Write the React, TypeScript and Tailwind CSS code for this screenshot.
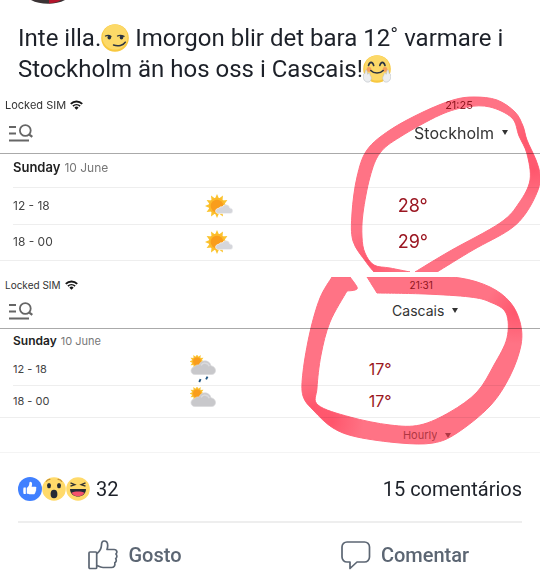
import type { ReactNode } from "react";
import clsx from "clsx";

type Point = [number, number];
type Weather = "sunny" | "showers" | "cloudy";

interface Forecast {
  hours: string;
  weather: Weather;
  temperature: string;
}

// Smooth closed outline through all points; a repeated point makes a corner
function smoothPath(points: Point[]) {
  const n = points.length;
  let d = `M${points[0][0]} ${points[0][1]}`;

  for (let i = 0; i < n; i++) {
    const p0 = points[(i - 1 + n) % n];
    const p1 = points[i];
    const p2 = points[(i + 1) % n];
    const p3 = points[(i + 2) % n];
    if (p1[0] === p2[0] && p1[1] === p2[1]) continue;

    d += `C${p1[0] + (p2[0] - p0[0]) / 6} ${p1[1] + (p2[1] - p0[1]) / 6} ${
      p2[0] - (p3[0] - p1[0]) / 6
    } ${p2[1] - (p3[1] - p1[1]) / 6} ${p2[0]} ${p2[1]}`;
  }

  return d + "Z";
}

const stockholmMarker: Point[] = [
  [374, 272], [374, 272], [366, 262], [353, 241], [352, 213], [357, 177],
  [367, 150], [390, 130], [423, 112], [453, 100], [474, 97], [497, 100],
  [515, 112], [523, 126], [527, 140], [536, 160], [540, 175], [538, 190],
  [526, 213], [509, 230], [473, 250], [437, 272], [437, 272], [415, 272],
  [415, 272], [450, 251], [500, 223], [519, 203], [530, 180], [527, 154],
  [519, 136], [512, 118], [490, 107], [467, 107], [440, 115], [400, 137],
  [380, 153], [370, 177], [363, 213], [362, 237], [365, 253], [374, 265],
  [390, 268], [410, 272], [410, 272],
];

const cascaisMarker: Point[] = [
  [332, 277], [332, 277], [320, 298], [310, 332], [303, 372], [303, 396],
  [314, 411], [333, 428], [357, 437], [400, 443], [433, 443], [457, 433],
  [490, 406], [510, 376], [521, 345], [520, 322], [510, 302], [490, 287],
  [460, 278], [423, 277], [367, 277], [367, 277], [377, 293], [377, 293],
  [425, 294], [470, 297], [490, 302], [506, 313], [507, 338], [494, 365],
  [477, 392], [450, 412], [420, 425], [390, 425], [350, 417], [318, 405],
  [317, 388], [321, 355], [330, 322], [347, 291], [347, 291], [355, 290],
  [357, 287], [350, 277], [350, 277],
];

function Marker({
  id,
  points,
  overlaps,
  viewBox,
}: {
  id: string;
  points: Point[];
  overlaps: Point[];
  viewBox: string;
}) {
  const outline = smoothPath(points);

  return (
    <svg
      viewBox={viewBox}
      preserveAspectRatio="none"
      className="pointer-events-none absolute inset-0 h-full w-full mix-blend-multiply"
      aria-hidden="true"
    >
      <defs>
        <clipPath id={`${id}-clip`}>
          <path d={outline} />
        </clipPath>
        <radialGradient id={`${id}-ink`}>
          <stop offset="0" stopColor="#ff4a62" stopOpacity=".7" />
          <stop offset="1" stopColor="#ff4a62" stopOpacity="0" />
        </radialGradient>
      </defs>
      <path d={outline} fill="#ff7385" stroke="#ff6d80" strokeWidth="1" />
      {/* darker ink where the pen slowed down */}
      <g clipPath={`url(#${id}-clip)`}>
        {overlaps.map(([x, y]) => (
          <circle key={`${x}-${y}`} cx={x} cy={y} r="32" fill={`url(#${id}-ink)`} />
        ))}
      </g>
    </svg>
  );
}

function Wifi() {
  return (
    <svg viewBox="0 0 13 10" className="h-2.5 w-[13px]" fill="none" stroke="#151515" aria-hidden="true">
      <path d="M.8 3.9a8.2 8.2 0 0 1 11.4 0" strokeWidth="2" />
      <path d="M2.9 6.2a5.2 5.2 0 0 1 7.2 0" strokeWidth="1.6" />
      <path d="M6.5 9.8 4.4 7.7a2.9 2.9 0 0 1 4.2 0Z" fill="#151515" stroke="none" />
    </svg>
  );
}

function SearchList() {
  return (
    <svg viewBox="0 0 25 18" className="h-[18px] w-[25px]" fill="none" stroke="#666" strokeWidth="1.8" aria-hidden="true">
      <path d="M1 3h7M1 9.5h7M1 16.5h20" />
      <circle cx="17.3" cy="6.5" r="5.4" />
      <path d="m21 10.3 3.3 2.6" strokeWidth="2.2" />
    </svg>
  );
}

function Sun({ x, y, r }: { x: number; y: number; r: number }) {
  return (
    <g transform={`translate(${x} ${y}) scale(${r})`}>
      {[0, 30, 60, 90, 120, 150, 180, 210, 240, 270, 300, 330].map((angle) => (
        <path key={angle} d="M-.3-.95 0-1.62.3-.95Z" fill="#fbc42f" transform={`rotate(${angle})`} />
      ))}
      <circle r="1.1" fill="#fcb92b" />
      <circle r=".85" fill="#f99d1c" />
    </g>
  );
}

function WeatherIcon({ weather }: { weather: Weather }) {
  if (weather === "sunny") {
    return (
      <svg viewBox="0 0 28 24" className="h-6 w-7" role="img" aria-label="Sunny intervals">
        <Sun x={12} y={12} r={7.4} />
        <path
          d="M13.8 19.6C9.5 19.6 9.6 14.3 14 14.2 14.8 12.8 16.2 12.6 17.3 13 19 9.3 24.3 10.3 24.9 14 29 14.3 28.6 19.6 25 19.6Z"
          fill="#d5d6db"
          stroke="#f3f3f5"
          strokeWidth=".8"
        />
      </svg>
    );
  }

  return (
    <svg viewBox="0 0 27 28" className="h-7 w-[27px]" role="img" aria-label={weather === "showers" ? "Showers" : "Cloudy"}>
      <Sun x={7} y={6.5} r={4.6} />
      <path
        d="M5 19.5C-.2 19.5-.2 12.6 4.5 11.8 5.5 10.1 7.5 9.7 9 10 11.2 4.3 19.5 4.3 21 10.8 27.2 11.8 26.700 19.5 21.500 19.5Z"
        fill="#c8c8cb"
        stroke="#d8d8db"
        strokeWidth=".7"
      />
      <path d="M11 10.300c2-3.300 7-2.800 8.300 1" fill="none" stroke="#dadadd" strokeWidth="1.5" />
      {weather === "showers" && (
        <path d="m10.600 24.200-1.400 2.800M17.500 21.600l-1.400 2.800" stroke="#205582" strokeWidth="1.9" />
      )}
    </svg>
  );
}

function Caret() {
  return (
    <svg viewBox="0 0 6 5" className="h-[5px] w-1.5" fill="currentColor" aria-hidden="true">
      <path d="M0 0h6L3 5Z" />
    </svg>
  );
}

function Picker({ label, value, className }: { label: string; value: string; className: string }) {
  return (
    <div className={clsx("flex items-center justify-center", className)}>
      <select
        aria-label={label}
        className="field-sizing-content appearance-none bg-transparent"
        defaultValue={value}
      >
        <option>{value}</option>
      </select>
      <Caret />
    </div>
  );
}

function ForecastTable({
  rows,
  rowClass,
  iconClass,
  tempClass,
}: {
  rows: Forecast[];
  rowClass: string;
  iconClass: string;
  tempClass: string;
}) {
  return (
    <div className="border-b border-[#eee] pl-[13px]">
      <table className="w-full table-fixed border-collapse">
        <tbody>
          {rows.map((row) => (
            <tr key={row.hours} className={clsx("border-b border-[#eee] last:border-0", rowClass)}>
              <th scope="row" className="p-0 text-left font-normal text-[#444]">
                {row.hours}
              </th>
              <td className={clsx("p-0", iconClass)}>
                <div className="flex">
                  <WeatherIcon weather={row.weather} />
                </div>
              </td>
              <td className={clsx("p-0 text-[#9b1722]", tempClass)}>{row.temperature}</td>
            </tr>
          ))}
        </tbody>
      </table>
    </div>
  );
}

function StockholmPanel() {
  return (
    <section className="relative overflow-hidden bg-white pb-[11px] font-['Inter',sans-serif]">
      <div className="grid h-[22px] grid-cols-[7fr_3fr] items-center text-[11px] text-[#333]">
        <span className="flex items-center gap-1 pl-[5px]">
          Locked SIM <Wifi />
        </span>
        <time className="text-center text-[#8f2f38]">21:25</time>
      </div>
      <div className="grid h-[38px] grid-cols-[7fr_3fr] items-center border-b border-[#aaa] pb-1">
        <button type="button" aria-label="Search places" className="w-fit pl-2">
          <SearchList />
        </button>
        <Picker label="Place" value="Stockholm" className="gap-2 pl-1 text-base text-[#333]" />
      </div>
      <div className="pl-[13px]">
        <h2 className="flex h-[34px] items-center gap-1 border-b border-[#eee] pb-1.5 text-[13px] font-semibold text-[#222]">
          Sunday <span className="text-xs font-normal text-[#777]">10 June</span>
        </h2>
      </div>
      <ForecastTable
        rows={[
          { hours: "12 - 18", weather: "sunny", temperature: "28°" },
          { hours: "18 - 00", weather: "sunny", temperature: "29°" },
        ]}
        rowClass="h-9 text-xs"
        iconClass="w-[36.5%]"
        tempClass="w-[27%] text-lg"
      />
      <Marker
        id="stockholm"
        points={stockholmMarker}
        overlaps={[[370, 262], [528, 140], [534, 170]]}
        viewBox="0 94 540 178"
      />
    </section>
  );
}

function CascaisPanel() {
  return (
    <section className="relative bg-white font-['Inter',sans-serif]">
      <div className="grid h-4 grid-cols-[56fr_44fr] items-center text-[10px] text-[#333]">
        <span className="flex items-center gap-1 pl-[5px]">
          Locked SIM <Wifi />
        </span>
        <time className="text-center text-[#8f2f38]">21:31</time>
      </div>
      <div className="grid h-9 grid-cols-[56fr_44fr] items-center border-b border-[#aaa]">
        <button type="button" aria-label="Search places" className="w-fit pl-2">
          <SearchList />
        </button>
        <Picker label="Place" value="Cascais" className="gap-2 pl-2 text-[14px] text-[#333]" />
      </div>
      <h2 className="flex h-6 items-center gap-1 pl-[13px] text-xs font-semibold text-[#222]">
        Sunday <span className="text-[11px] font-normal text-[#777]">10 June</span>
      </h2>
      <ForecastTable
        rows={[
          { hours: "12 - 18", weather: "showers", temperature: "17°" },
          { hours: "18 - 00", weather: "cloudy", temperature: "17°" },
        ]}
        rowClass="h-8 text-[11px]"
        iconClass="w-[34%]"
        tempClass="w-[32.5%] text-base"
      />
      <div className="grid h-[35px] grid-cols-[56fr_44fr] items-center border-b border-[#f4f4f4]">
        <Picker label="Interval" value="Hourly" className="col-start-2 gap-2 pl-3 text-[11px] text-[#b07a80]" />
      </div>
      <Marker
        id="cascais"
        points={cascaisMarker}
        overlaps={[[312, 408], [516, 312], [332, 422]]}
        viewBox="0 277 540 176"
      />
    </section>
  );
}

function Smirk() {
  return (
    <svg viewBox="0 0 28 28" className="inline-block size-7 align-[-6px]" role="img" aria-label="smirking face">
      <circle cx="14" cy="14" r="13.8" fill="#f8c83f" />
      <circle cx="14" cy="13" r="12.6" fill="#fcd968" />
      <g fill="none" stroke="#2b3442" strokeWidth="1.3" strokeLinecap="round">
        <path d="M4.500 12c2-1 4-.8 5.500.4M16.500 12c2-1 4.500-.8 6.500.4" />
        <path d="M12.500 21c4.500 1.500 10 .5 11.800-2.800" strokeWidth="1.5" />
      </g>
      <ellipse cx="8.3" cy="13.4" rx="1.8" ry="2" fill="#2b3442" />
      <ellipse cx="20.5" cy="13.4" rx="1.8" ry="2" fill="#2b3442" />
    </svg>
  );
}

function Hug() {
  const hand =
    "M2.500 15.200c1-.7 1.600.2 1.600 1.700l.7 2.400c.7-1.800 2.300-1.600 2.200.2-.1 1 1.700 2 1.300 4.200-.5 3.200-3.200 4.100-5.400 2.900C.3 25.300-.4 22 .6 19.300c.4-1.100 1.200-.7 1.200-.7Z";

  return (
    <svg viewBox="0 0 28 28" className="inline-block size-7 align-[-6px]" role="img" aria-label="hugging face">
      <circle cx="14" cy="14" r="13.8" fill="#f8c83f" />
      <circle cx="14" cy="13" r="12.6" fill="#fcd968" />
      <circle cx="6" cy="14.5" r="2.4" fill="#f5a05d" />
      <circle cx="22" cy="14.5" r="2.4" fill="#f5a05d" />
      <g fill="none" stroke="#2b3442" strokeWidth="1.6" strokeLinecap="round">
        <path d="M5.500 10.500c1.200-4.200 4-4.200 5.200 0M16.800 10.500c1.200-4.200 4-4.200 5.200 0" />
        <path d="M7.800 15.500c3 3.300 9.400 3.300 12.400 0" />
      </g>
      <path d={hand} fill="#eceef0" stroke="#b9bdc4" strokeWidth=".6" />
      <path d={hand} fill="#eceef0" stroke="#b9bdc4" strokeWidth=".6" transform="matrix(-1 0 0 1 28 0)" />
    </svg>
  );
}

function Reactions() {
  return (
    <span className="flex" aria-hidden="true">
      <svg viewBox="0 0 24 24" className="size-6">
        <circle cx="12" cy="12" r="12" fill="#4080ff" />
        <path
          d="M5.800 10.600h2v6.300h-2c-.7 0-.7-6.300 0-6.300ZM8.800 11c1.500-1 2.600-2.600 2.600-5.200 0-1.600 2.800-1.200 2.700 1.400 0 1-.3 1.700-.5 2.500h3.700c1.400 0 1.400 1.800.5 2.200.8.700.5 1.800-.3 2 .6.800.2 1.700-.6 1.800.3.900-.2 1.500-1.400 1.500h-4c-1.300 0-1.800-.5-2.700-.7Z"
          fill="#fff"
        />
      </svg>
      <svg viewBox="0 0 24 24" className="size-6">
        <circle cx="12" cy="12" r="11.8" fill="#ffda6b" />
        <g fill="#252b36">
          <ellipse cx="7" cy="8.6" rx="2" ry="2.7" />
          <ellipse cx="17" cy="8.6" rx="2" ry="2.7" />
          <ellipse cx="12" cy="17" rx="3.4" ry="4.3" />
        </g>
        <path d="M4 4.700c1-1.600 2.600-2.400 4.400-2.200M15.600 2.500c1.800-.2 3.400.6 4.400 2.200" fill="none" stroke="#c79232" strokeWidth="1.2" />
      </svg>
      <svg viewBox="0 0 24 24" className="size-6">
        <circle cx="12" cy="12" r="11.8" fill="#ffda6b" />
        <path d="m4.500 5.800 4.300 1.900-4.300 1.500M19.500 5.800l-4.300 1.900 4.300 1.500" fill="none" stroke="#333" strokeWidth="1.4" />
        <path d="M4 12h16c0 10-16 10-16 0Z" fill="#252b36" />
        <path d="M5.500 15.700c3-1.600 10-1.600 13 0-2.300 4.700-10.700 4.700-13 0Z" fill="#f5516c" />
      </svg>
    </span>
  );
}

function ActionButton({ icon, children }: { icon: ReactNode; children: ReactNode }) {
  return (
    <button type="button" className="flex items-center justify-center gap-2.5 text-xl font-medium text-[#5c6673]">
      {icon}
      {children}
    </button>
  );
}

export default function App() {
  return (
    <article className="overflow-hidden bg-white font-['Roboto',sans-serif] text-[#1d2129]">
      <header className="h-[23px] pl-[31px]">
        <svg viewBox="0 0 34 4" className="h-1 w-[34px]" aria-hidden="true">
          <path d="M0 0c9 5 25 5 34 0Z" fill="#3b3335" />
          <path d="M18 0h12c-3 2.200-8 3.200-12 3.400Z" fill="#b3152c" />
        </svg>
      </header>

      <p className="px-[18px] text-2xl leading-[31px]">
        Inte illa.
        <Smirk /> Imorgon blir det bara 12˚ varmare i Stockholm än hos oss i Cascais!
        <Hug />
      </p>

      <div className="flex flex-col gap-[5px] pt-[9px]">
        <StockholmPanel />
        <CascaisPanel />
      </div>

      <footer>
        <div className="mx-[18px] flex h-[70px] items-center justify-between border-b-2 border-[#eee] pt-1 text-xl">
          <span className="flex items-center gap-1.5">
            <Reactions /> 32
          </span>
          <a href="#comments">15 comentários</a>
        </div>
        <div id="comments" className="grid h-16 grid-cols-2 items-center">
          <ActionButton
            icon={
              <svg viewBox="0 0 30 30" className="size-[30px]" fill="none" stroke="currentColor" strokeWidth="1.7" strokeLinejoin="round" aria-hidden="true">
                <rect x="1" y="12" width="7.7" height="16.5" rx="1" />
                <path d="M9 13.500c2-1.500 4.300-4.300 4.500-8.500 0-2.500 1-4 2.600-4 2 0 3.600 1.800 3.600 4.600 0 1.500-.3 2.800-.7 3.900h7.200c2.600 0 3.500 2.800 1.700 4.500 1.400 1.500 1.200 3.600-.2 4.600 1 1.600.5 3.400-.9 4.200.5 2.700-.8 4.700-3.300 4.700H15c-3 0-4-1-6-2" />
              </svg>
            }
          >
            Gosto
          </ActionButton>
          <ActionButton
            icon={
              <svg viewBox="0 0 30 30" className="size-[30px]" fill="none" stroke="currentColor" strokeWidth="1.7" strokeLinejoin="round" aria-hidden="true">
                <path d="M6 2h17.500A5 5 0 0 1 28.500 7v10a5 5 0 0 1-5 5H16l-7 6.500V22H6a5 5 0 0 1-5-5V7a5 5 0 0 1 5-5Z" />
              </svg>
            }
          >
            Comentar
          </ActionButton>
        </div>
      </footer>
    </article>
  );
}
